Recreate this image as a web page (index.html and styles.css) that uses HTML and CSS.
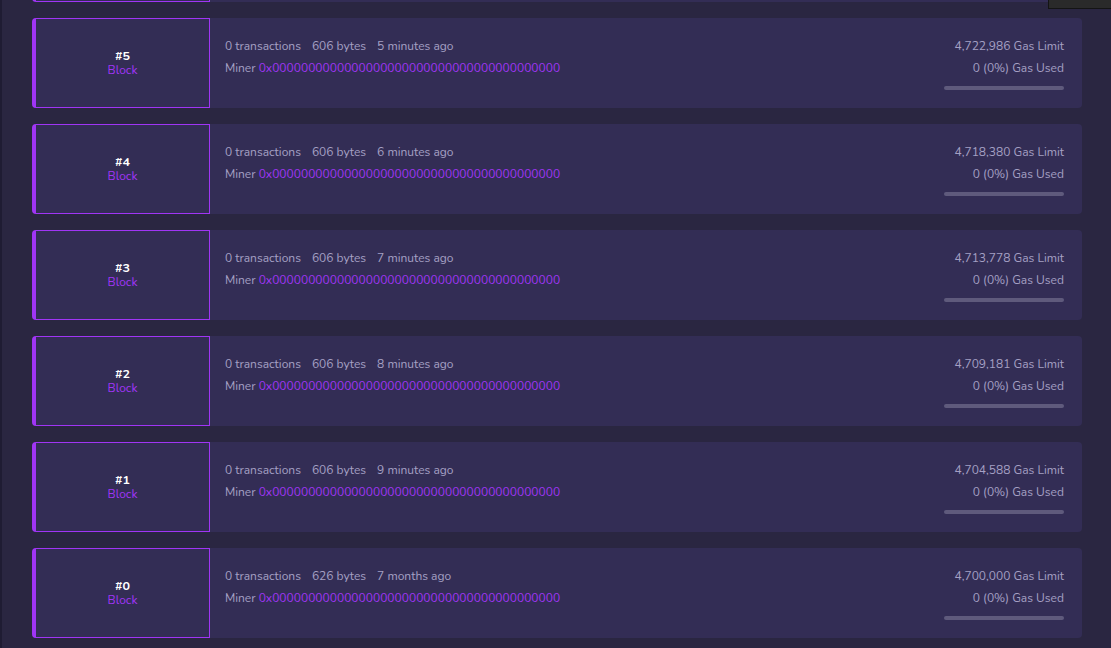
FILE: index.html
```html
<!DOCTYPE html>
<html>
<head>
<meta charset="utf-8">
<link rel="stylesheet" href="styles.css">
</head>
<body>
<div class="page">
  <div class="tip"></div>
  <div class="list">
    <div class="card">
      <div class="blk"></div>
      <div class="info"></div>
      <div class="gas"></div>
    </div>
    <div class="card">
      <div class="blk"><div class="num">#5</div><div class="lbl">Block</div></div>
      <div class="info">
        <div class="line"><span>0 transactions</span><span>606 bytes</span><span>5 minutes ago</span></div>
        <div class="line">Miner <span class="addr">0x0000000000000000000000000000000000000000</span></div>
      </div>
      <div class="gas"><div class="line">4,722,986 Gas Limit</div><div class="line">0 (0%) Gas Used</div><div class="bar"></div></div>
    </div>
    <div class="card">
      <div class="blk"><div class="num">#4</div><div class="lbl">Block</div></div>
      <div class="info">
        <div class="line"><span>0 transactions</span><span>606 bytes</span><span>6 minutes ago</span></div>
        <div class="line">Miner <span class="addr">0x0000000000000000000000000000000000000000</span></div>
      </div>
      <div class="gas"><div class="line">4,718,380 Gas Limit</div><div class="line">0 (0%) Gas Used</div><div class="bar"></div></div>
    </div>
    <div class="card">
      <div class="blk"><div class="num">#3</div><div class="lbl">Block</div></div>
      <div class="info">
        <div class="line"><span>0 transactions</span><span>606 bytes</span><span>7 minutes ago</span></div>
        <div class="line">Miner <span class="addr">0x0000000000000000000000000000000000000000</span></div>
      </div>
      <div class="gas"><div class="line">4,713,778 Gas Limit</div><div class="line">0 (0%) Gas Used</div><div class="bar"></div></div>
    </div>
    <div class="card">
      <div class="blk"><div class="num">#2</div><div class="lbl">Block</div></div>
      <div class="info">
        <div class="line"><span>0 transactions</span><span>606 bytes</span><span>8 minutes ago</span></div>
        <div class="line">Miner <span class="addr">0x0000000000000000000000000000000000000000</span></div>
      </div>
      <div class="gas"><div class="line">4,709,181 Gas Limit</div><div class="line">0 (0%) Gas Used</div><div class="bar"></div></div>
    </div>
    <div class="card">
      <div class="blk"><div class="num">#1</div><div class="lbl">Block</div></div>
      <div class="info">
        <div class="line"><span>0 transactions</span><span>606 bytes</span><span>9 minutes ago</span></div>
        <div class="line">Miner <span class="addr">0x0000000000000000000000000000000000000000</span></div>
      </div>
      <div class="gas"><div class="line">4,704,588 Gas Limit</div><div class="line">0 (0%) Gas Used</div><div class="bar"></div></div>
    </div>
    <div class="card">
      <div class="blk"><div class="num">#0</div><div class="lbl">Block</div></div>
      <div class="info">
        <div class="line"><span>0 transactions</span><span>626 bytes</span><span>7 months ago</span></div>
        <div class="line">Miner <span class="addr">0x0000000000000000000000000000000000000000</span></div>
      </div>
      <div class="gas"><div class="line">4,700,000 Gas Limit</div><div class="line">0 (0%) Gas Used</div><div class="bar"></div></div>
    </div>
  </div>
</div>
</body>
</html>
```
FILE: styles.css
```css
html, body {
  margin: 0;
  padding: 0;
  height: 100%;
  overflow: hidden;
}
body {
  background: #2a2641;
  font-family: "Nunito", Lato, "Open Sans", sans-serif;
  font-size: 12px;
}
.page {
  position: relative;
  height: 648px;
  border-left: 2px solid #1f1c33;
  box-sizing: border-box;
  overflow: hidden;
}
.tip {
  position: absolute;
  top: -2px;
  left: 1046px;
  width: 80px;
  height: 9px;
  background: #2a2a2a;
  border: 1px solid #141414;
  z-index: 2;
}
.list {
  display: flex;
  flex-direction: column;
  gap: 16px;
  margin-top: -88px;
  padding-left: 30px;
  width: 1050px;
}
.card {
  display: flex;
  height: 90px;
  background: #332d55;
  border-radius: 4px;
}
.blk {
  width: 178px;
  flex: none;
  box-sizing: border-box;
  border: 1px solid #a035f5;
  border-left: 4px solid #a035f5;
  border-radius: 4px 0 0 4px;
  display: flex;
  flex-direction: column;
  align-items: center;
  justify-content: center;
  line-height: 15px;
}
.num {
  color: #ffffff;
  font-weight: 700;
  font-size: 12.5px;
}
.lbl {
  color: #a035f5;
}
.info {
  flex: 1;
  padding: 17px 0 0 15px;
  color: #a5a0c4;
}
.line {
  line-height: 22px;
  white-space: nowrap;
}
.info .line span + span {
  margin-left: 11px;
}
.info .line .addr {
  color: #a035f5;
  margin-left: 0;
}
.gas {
  padding: 17px 18px 0 0;
  display: flex;
  flex-direction: column;
  align-items: flex-end;
  color: #a5a0c4;
}
.bar {
  margin-top: 7px;
  width: 120px;
  height: 4px;
  border-radius: 2px;
  background: #5f5a7c;
}
```
